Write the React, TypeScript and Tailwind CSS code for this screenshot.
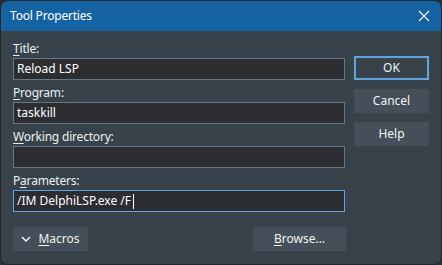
import React from 'react';

const font = { fontFamily: '"Noto Sans", "Open Sans", sans-serif' };

function Label({ children }: { children: React.ReactNode }) {
  return (
    <div className="h-[22px] pt-[5px] text-[12px] leading-[16px] tracking-[-0.2px] text-[#f0f0f0]">{children}</div>
  );
}

function Field({ value, active, caret }: { value: string; active?: boolean; caret?: boolean }) {
  return (
    <div
      className={`h-[22px] w-[332px] border bg-[#2b2d31] px-[3px] flex items-center text-[12px] text-white ${
        active ? 'border-[#5ea4df]' : 'border-[#687783]'
      }`}
    >
      <span>{value}</span>
      {caret && <span className="ml-[2px] h-[15px] w-[1px] bg-white" />}
    </div>
  );
}

function Button({ children, primary, className = '' }: { children: React.ReactNode; primary?: boolean; className?: string }) {
  return (
    <div
      className={`h-[24px] flex items-center justify-center text-[12px] text-[#f2f2f2] ${
        primary ? 'border-2 border-[#62a5de] bg-[#37424b]' : 'bg-[#444f5a]'
      } ${className}`}
    >
      {children}
    </div>
  );
}

export default function App() {
  return (
    <div className="w-[442px] h-[265px] bg-[#2a3036]" style={font}>
      <div className="w-full h-full rounded-[8px] border border-[#23282d] overflow-hidden bg-[#37424b] flex flex-col">
        <div className="h-[30px] bg-[#1562a3] flex items-center justify-between pl-[9px] pr-[11px]">
          <span className="text-[12px] tracking-[-0.2px] text-white">Tool Properties</span>
          <svg width="12" height="12" viewBox="0 0 12 12" className="text-white">
            <path d="M1 1 L11 11 M11 1 L1 11" stroke="currentColor" strokeWidth="1.1" />
          </svg>
        </div>

        <div className="flex pl-[12px] pt-[5px]">
          <div className="flex flex-col">
            <Label><span className="underline underline-offset-2">T</span>itle:</Label>
            <Field value="Reload LSP" />
            <Label><span className="underline underline-offset-2">P</span>rogram:</Label>
            <Field value="taskkill" />
            <Label><span className="underline underline-offset-2">W</span>orking directory:</Label>
            <Field value="" />
            <Label>P<span className="underline underline-offset-2">a</span>rameters:</Label>
            <Field value="/IM DelphiLSP.exe /F" active caret />
          </div>
          <div className="ml-[9px] pt-[20px] flex flex-col gap-[9px]">
            <Button primary className="w-[75px]">OK</Button>
            <Button className="w-[75px]">Cancel</Button>
            <Button className="w-[75px]">Help</Button>
          </div>
        </div>

        <div className="flex pl-[12px] pt-[15px]">
          <Button className="w-[75px] gap-[7px]">
            <svg width="10" height="6" viewBox="0 0 10 6">
              <path d="M1 1 L5 5 L9 1" stroke="white" strokeWidth="1.4" fill="none" />
            </svg>
            <span><span className="underline underline-offset-2">M</span>acros</span>
          </Button>
          <Button className="ml-[165px] w-[93px]">
            <span><span className="underline underline-offset-2">B</span>rowse...</span>
          </Button>
        </div>
      </div>
    </div>
  );
}
